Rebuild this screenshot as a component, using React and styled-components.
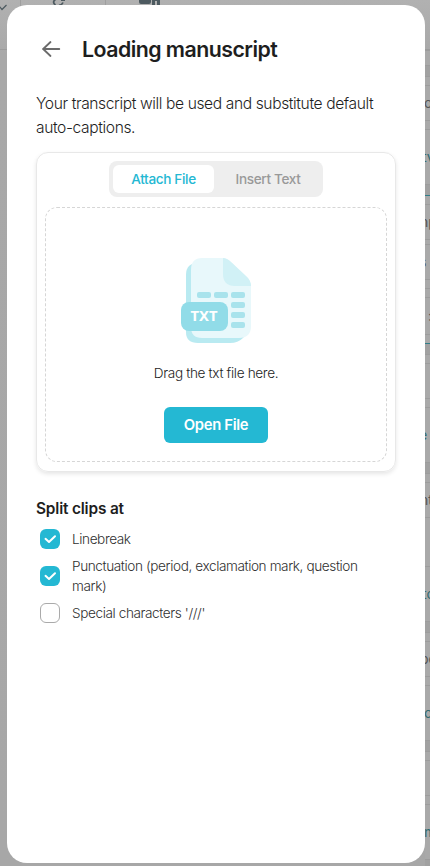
import React from "react";
import styled, { createGlobalStyle } from "styled-components";

const Global = createGlobalStyle`
  * { box-sizing: border-box; }
  body { margin: 0; background: #a8a8a8; font-family: Inter, "Noto Sans", sans-serif; color: #1e1e1e; }
  h1, h2, p { margin: 0; }
`;

const Page = styled.div`
  position: relative;
  height: 866px;
  overflow: hidden;
  background: linear-gradient(#b1b1b1, #a8a8a8 55px, #a7a7a7);
`;
const Toolbar = styled.div`
  height: 50px;
  display: flex;
  border-bottom: 1px solid #9b9b9b;
  color: #4d5a60;
`;
const Tool = styled.div`
  width: ${(p) => p.$w}px;
  height: 50px;
  border-right: ${(p) => (p.$last ? "0" : "1px solid #9f9f9f")};
  svg { display: block; }
`;
const Clips = styled.div`
  margin-left: 425px;
  width: 5px;
`;
const Segment = styled.div`
  height: ${(p) => p.$h}px;
  background: ${(p) => (p.$band ? "#a1a1a1" : "#a9a9a9")};
  border-top: 1px solid ${(p) => p.$line || "#9c9c9c"};
  color: ${(p) => (p.$teal ? "#31696f" : "#555")};
  font-size: 14px;
  line-height: ${(p) => p.$h - 1}px;
  overflow: hidden;
  white-space: nowrap;
  text-indent: ${(p) => p.$indent || 0}px;
`;

const Dialog = styled.section`
  position: absolute;
  top: 5px;
  left: 7px;
  width: 418px;
  height: 858px;
  padding: 24px 29px;
  background: #fff;
  border-radius: 20px;
`;
const Header = styled.header`
  display: flex;
  align-items: center;
  height: 40px;
  svg { margin-left: 2px; flex: none; }
`;
const Title = styled.h1`
  margin-left: 20px;
  font-size: 21.3px;
  font-weight: 630;
  letter-spacing: -0.52px;
  line-height: 30px;
`;
const Intro = styled.p`
  margin-top: 23px;
  font-size: 15.6px;
  font-weight: 300;
  line-height: 24px;
  letter-spacing: -0.39px;
  white-space: nowrap;
`;
const Card = styled.div`
  width: 360px;
  height: 320px;
  margin-top: 12px;
  padding: 8px;
  display: flex;
  flex-direction: column;
  align-items: center;
  border: 1px solid #e8e8e8;
  border-radius: 12px;
  box-shadow: 0 2px 4px rgba(0, 0, 0, 0.1);
`;
const Tabs = styled.div`
  width: 214px;
  height: 36px;
  padding: 4px;
  display: flex;
  background: #eee;
  border-radius: 8px;
`;
const Tab = styled.button`
  flex: ${(p) => (p.$active ? "0 0 101px" : "0 0 108px")};
  padding: 0 0 1px;
  border: 0;
  border-radius: 6px;
  background: ${(p) => (p.$active ? "#fff" : "transparent")};
  color: ${(p) => (p.$active ? "#24b8d3" : "#999")};
  font: 500 13.6px Inter, sans-serif;
  letter-spacing: -0.36px;
`;
const DropZone = styled.div`
  width: 342px;
  height: 255px;
  margin-top: 10px;
  display: flex;
  flex-direction: column;
  align-items: center;
  padding-top: 50px;
  border: 1px dashed #d6d6d6;
  border-radius: 12px;
`;
const DropText = styled.p`
  margin-top: 19px;
  font-size: 13.6px;
  font-weight: 300;
  line-height: 20px;
  letter-spacing: -0.34px;
`;
const OpenButton = styled.button`
  width: 104px;
  height: 36px;
  margin-top: 24px;
  padding: 0 0 1px;
  border: 0;
  border-radius: 6px;
  background: #24b8d3;
  color: #fff;
  font: 600 14.8px Inter, sans-serif;
  letter-spacing: -0.3px;
`;
const Subtitle = styled.h2`
  margin-top: 25px;
  font-size: 15.4px;
  font-weight: 600;
  line-height: 24px;
  letter-spacing: -0.17px;
`;
const Options = styled.div`
  margin-top: 8px;
  display: flex;
  flex-direction: column;
  gap: 7px;
`;
const Option = styled.label`
  display: flex;
  align-items: center;
  gap: 12px;
  padding-left: 4px;
  font-size: 13.6px;
  font-weight: 300;
  line-height: 20px;
  letter-spacing: -0.4px;
  color: #303030;
`;
const OptionLabel = styled.span`
  width: 300px;
`;
const Box = styled.span`
  flex: none;
  width: 20px;
  height: 20px;
  border-radius: 6px;
  border: ${(p) => (p.$checked ? "0" : "1px solid #aaa")};
  background: ${(p) => (p.$checked ? "#24b8d3" : "#fff")};
  svg { display: block; }
`;

const segments = [
  { h: 15 },
  { h: 11, band: true },
  { h: 9 },
  { h: 35, text: "o", indent: -1 },
  { h: 9 },
  { h: 55, text: "tv", teal: true, indent: -3 },
  { h: 11, band: true },
  { h: 9, line: "#317e89" },
  { h: 35, text: "np", indent: -5 },
  { h: 5 },
  { h: 35, text: "s", indent: -6 },
  { h: 9 },
  { h: 9 },
  { h: 37, text: ":", indent: 3 },
  { h: 9 },
  { h: 11, band: true, line: "#317e89" },
  { h: 9 },
  { h: 35 },
  { h: 9 },
  { h: 55, text: "e", teal: true, indent: -6 },
  { h: 11, band: true },
  { h: 9 },
  { h: 35, text: "nt", indent: -5 },
  { h: 49 },
  { h: 55, text: "to", teal: true, indent: -3 },
  { h: 11, band: true },
  { h: 9 },
  { h: 35, text: "pe", indent: -5 },
  { h: 9 },
  { h: 55, text: "c", teal: true, indent: -1 },
  { h: 11, band: true },
  { h: 9 },
  { h: 35 },
  { h: 9 },
  { h: 55, text: "m", teal: true, indent: -1 },
  { h: 11, band: true },
];

const options = [
  { label: "Linebreak", checked: true },
  { label: "Punctuation (period, exclamation mark, question mark)", checked: true },
  { label: "Special characters '///'", checked: false },
];

function FileArt() {
  return (
    <svg width="72" height="86" viewBox="0 0 72 86">
      <path d="M18 5Q6 5 6 17V74Q6 85 18 85H50Q58 85 63 80L68 74V30L40 5Z" fill="#b9eaf1" />
      <path d="M22 0H42Q47 0 51 4L67 19Q71 23 71 28V68Q71 80 59 80H22Q11 80 11 69V12Q11 0 22 0Z" fill="#e8f8fb" />
      <path d="M43 0Q47 0 51 4L67 19Q71 23 71 28H55Q43 28 43 16Z" fill="#d1f1f6" />
      <g fill="#a9e3ec">
        <rect x="17" y="34" width="14" height="6" rx="2" />
        <rect x="34" y="34" width="14" height="6" rx="2" />
        <rect x="51" y="34" width="14" height="6" rx="2" />
        <rect x="51" y="44" width="14" height="6" rx="2" />
        <rect x="51" y="54" width="14" height="6" rx="2" />
        <rect x="51" y="64" width="14" height="6" rx="2" />
      </g>
      <rect x="1" y="44" width="47" height="29" rx="8" fill="#91dce8" />
      <text x="24" y="63" textAnchor="middle" fontFamily="Noto Sans, sans-serif" fontWeight="700" fontSize="13.5" textLength="27" lengthAdjust="spacingAndGlyphs" fill="#fff">TXT</text>
    </svg>
  );
}

export default function App() {
  return (
    <Page>
      <Global />
      <Toolbar>
        <Tool $w={21}>
          <svg width="20" height="20" fill="none" stroke="currentColor" strokeWidth="1.2"><path d="M-1 6L2 9.5L6.5 5" /></svg>
        </Tool>
        <Tool $w={85}>
          <svg width="84" height="20" fill="none" stroke="currentColor" strokeWidth="1.8"><path d="M35-1Q30.5 2 34.5 5M38 5.5Q41 5 42 2.5M40 0H44" /></svg>
        </Tool>
        <Tool $w={324} $last>
          <svg width="60" height="20" fill="currentColor"><rect x="33" y="-4" width="12" height="8" rx="2" /><path d="M46 6V0Q46-2 49-2H51Q54-2 54 0V5H51V1H49V6Z" /></svg>
        </Tool>
      </Toolbar>
      <Clips>
        {segments.map((s, i) => (
          <Segment key={i} $h={s.h} $band={s.band} $line={s.line} $teal={s.teal} $indent={s.indent}>{s.text}</Segment>
        ))}
      </Clips>
      <Dialog role="dialog">
        <Header>
          <svg width="24" height="24" viewBox="0 0 24 24" fill="none" stroke="#6b6b6b" strokeWidth="1.8" strokeLinecap="round" strokeLinejoin="round">
            <path d="M21.3 12H5M12.5 5L5.2 12L12.5 19" />
          </svg>
          <Title>Loading manuscript</Title>
        </Header>
        <Intro>Your transcript will be used and substitute default<br />auto-captions.</Intro>
        <Card>
          <Tabs>
            <Tab $active>Attach File</Tab>
            <Tab>Insert Text</Tab>
          </Tabs>
          <DropZone>
            <FileArt />
            <DropText>Drag the txt file here.</DropText>
            <OpenButton>Open File</OpenButton>
          </DropZone>
        </Card>
        <Subtitle>Split clips at</Subtitle>
        <Options>
          {options.map((o) => (
            <Option key={o.label}>
              <Box $checked={o.checked}>
                {o.checked && (
                  <svg width="20" height="20" fill="none" stroke="#fff" strokeWidth="2" strokeLinecap="round" strokeLinejoin="round"><path d="M5.5 9.8L9 13L15 7.2" /></svg>
                )}
              </Box>
              <OptionLabel>{o.label}</OptionLabel>
            </Option>
          ))}
        </Options>
      </Dialog>
    </Page>
  );
}
